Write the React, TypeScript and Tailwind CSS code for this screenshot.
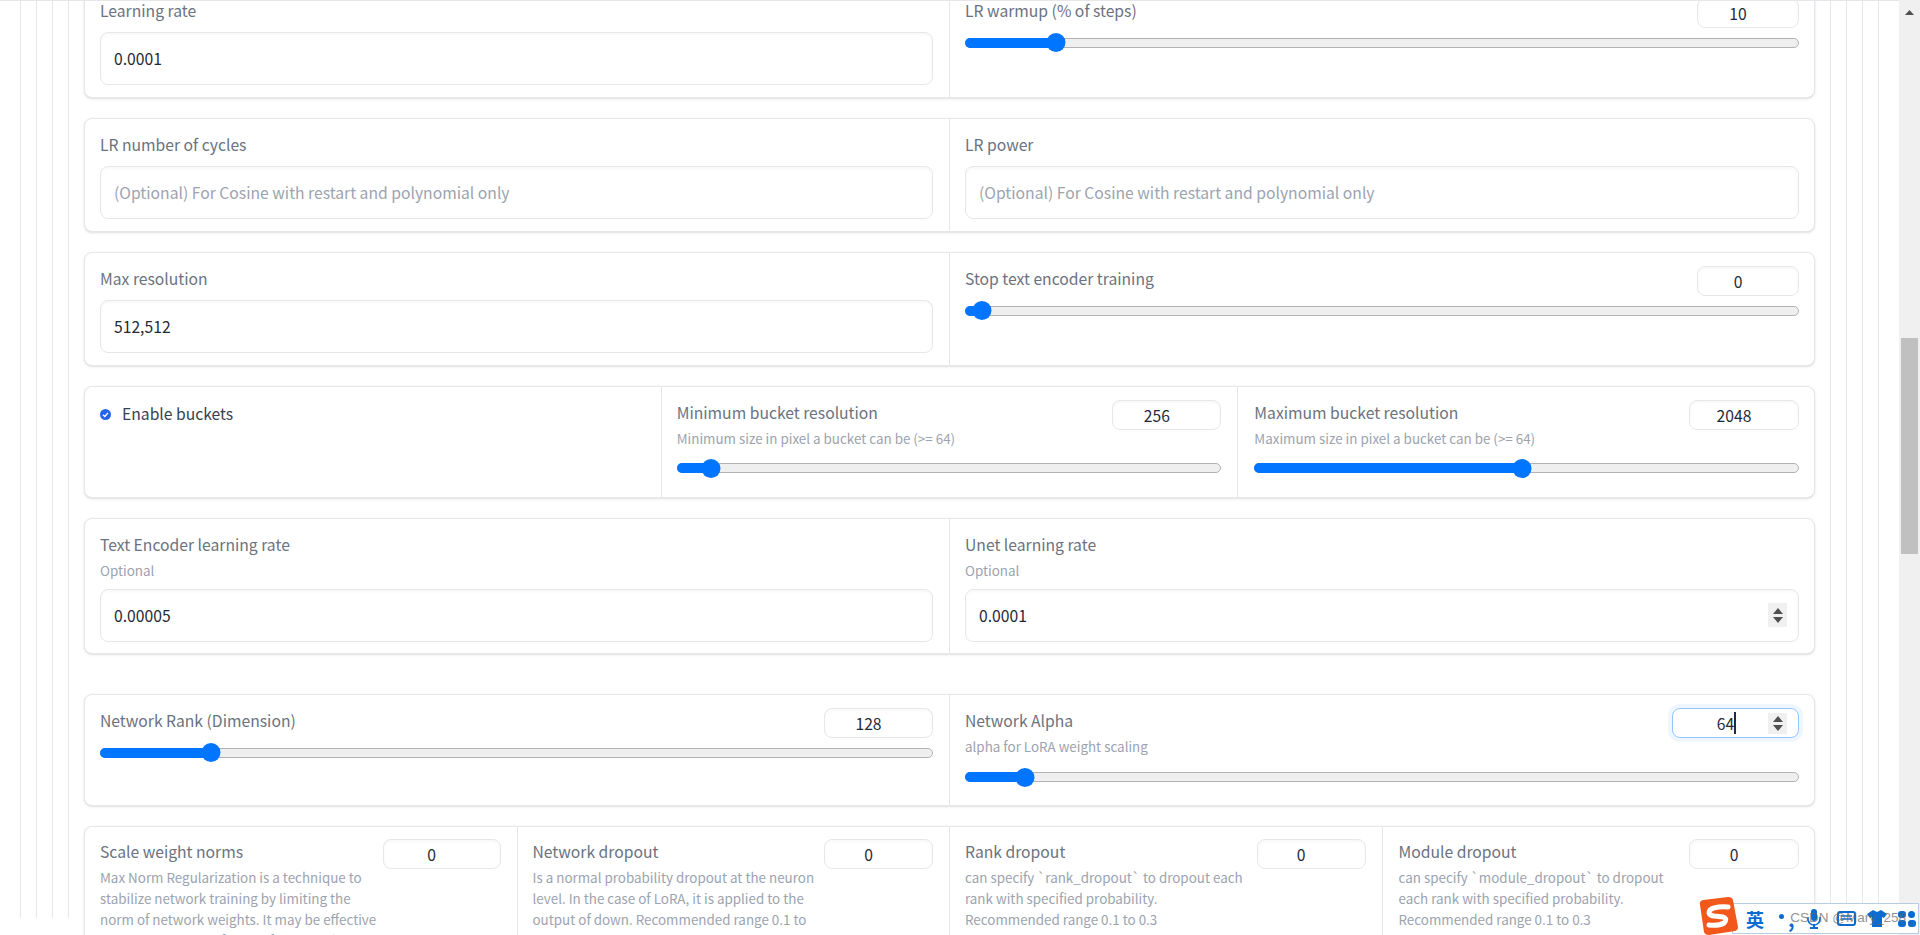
const Label = ({ children }: { children: React.ReactNode }) => (
  <div className="-mb-[2px] text-[15.7px] leading-[26px] text-[#6b7280]">{children}</div>
);

const Info = ({ children }: { children: React.ReactNode }) => (
  <div className="mt-1 text-[13.4px] leading-[21px] text-[#9ca3af]">{children}</div>
);

function TextBox({ value, placeholder, spinner }: { value?: string; placeholder?: string; spinner?: boolean }) {
  return (
    <div className="relative">
      <input
        readOnly
        value={value ?? ""}
        placeholder={placeholder}
        className="block h-[53px] w-full rounded-lg border border-[#e5e7eb] bg-white pb-px pl-[13px] text-[15.7px] text-[#1f2937] shadow-[inset_0_2px_3px_rgba(0,0,0,0.03)] outline-none placeholder:text-[#9ca3af]"
      />
      {spinner && <Spinner className="absolute right-3 top-[14px] h-6" />}
    </div>
  );
}

function Spinner({ className }: { className: string }) {
  return (
    <div className={`flex w-[19px] flex-col items-center justify-center gap-[3px] bg-[#f0f0f0] ${className}`}>
      <svg width="10" height="6" viewBox="0 0 10 6"><path d="M5 0L10 6H0Z" fill="#505050" /></svg>
      <svg width="10" height="6" viewBox="0 0 10 6"><path d="M0 0H10L5 6Z" fill="#505050" /></svg>
    </div>
  );
}

function NumberBox({ value, width }: { value: string; width: string }) {
  return (
    <input
      readOnly
      value={value}
      className={`block h-[30px] shrink-0 rounded-lg border border-[#e5e7eb] bg-white pt-px pr-5 text-center text-[15.7px] text-[#1f2937] shadow-[inset_0_2px_3px_rgba(0,0,0,0.03)] outline-none ${width}`}
    />
  );
}

function Slider({ pct, className }: { pct: number; className: string }) {
  return (
    <div className={`relative flex h-5 items-center ${className}`}>
      <div className="h-[10px] w-full rounded-full border border-[#b2b2b2] bg-[#efefef]" />
      <div className="absolute left-0 h-[10px] rounded-l-full bg-[#0075ff]" style={{ width: `${pct}%` }} />
      <div
        className="absolute size-[19px] -translate-x-1/2 rounded-full bg-[#0075ff]"
        style={{ left: `${pct}%` }}
      />
    </div>
  );
}

function Field({ label, info, value, placeholder, spinner, pad }: {
  label: string; info?: string; value?: string; placeholder?: string; spinner?: boolean; pad: string;
}) {
  return (
    <div className={`bg-white pt-[13px] pb-3 ${pad}`}>
      <Label>{label}</Label>
      {info && <Info>{info}</Info>}
      <div className={info ? "mt-2" : "mt-[10px]"}>
        <TextBox value={value} placeholder={placeholder} spinner={spinner} />
      </div>
    </div>
  );
}

function SliderField({ label, info, value, pct, width, pad }: {
  label: string; info?: string; value: string; pct: number; width: string; pad: string;
}) {
  return (
    <div className={`bg-white pt-[13px] ${pad}`}>
      <div className="flex items-start justify-between">
        <div>
          <Label>{label}</Label>
          {info && <Info>{info}</Info>}
        </div>
        <NumberBox value={value} width={width} />
      </div>
      <Slider pct={pct} className={info ? "mt-[9px]" : "mt-[4.5px]"} />
    </div>
  );
}

function AlphaField() {
  return (
    <div className="bg-white pt-[13px] pl-[15px] pr-[15px]">
      <div className="flex items-start justify-between">
        <div>
          <Label>Network Alpha</Label>
          <Info>alpha for LoRA weight scaling</Info>
        </div>
        <div className="relative w-[127px] shrink-0">
          <input
            readOnly
            value="64"
            className="block h-[30px] w-full rounded-lg border border-[#93c5fd] bg-white pt-px pr-5 text-center text-[15.7px] text-[#1f2937] shadow-[0_0_0_4px_#eff6ff] outline-none"
          />
          <div className="absolute left-[62px] top-1 h-[22px] w-[2px] bg-[#1f2a44]" />
          <Spinner className="absolute right-3 top-[5px] h-[21px]" />
        </div>
      </div>
      <Slider pct={7.2} className="mt-[10px]" />
    </div>
  );
}

function Desc({ label, text, value, width, pad }: {
  label: string; text: string; value: string; width: string; pad: string;
}) {
  return (
    <div className={`flex items-start gap-1 bg-white pt-3 ${pad}`}>
      <div className="min-w-0 flex-1">
        <Label>{label}</Label>
        <Info>{text}</Info>
      </div>
      <NumberBox value={value} width={width} />
    </div>
  );
}

const Card = ({ className, children }: { className: string; children: React.ReactNode }) => (
  <div className={`grid gap-px overflow-hidden rounded-lg border border-[#e5e7eb] bg-[#e5e7eb] shadow-sm ${className}`}>
    {children}
  </div>
);

const Rail = ({ children }: { children: React.ReactNode }) => (
  <div className="h-full border-x border-[#e5e7eb] px-[15px]">{children}</div>
);

function Sogou() {
  return (
    <div className="absolute bottom-0 right-0 h-[38px] w-[221px]">
      <div className="absolute bottom-px right-px flex h-[31px] w-[187px] items-center border border-[#b8cce4] bg-white">
        <span className="ml-[13px] text-lg leading-none font-bold text-[#0a6cd0]">英</span>
        <span className="ml-[15px] -mt-[5px] size-[5px] rounded-full bg-[#0a6cd0]" />
        <span className="ml-1 text-xl leading-none font-bold text-[#0a6cd0]">,</span>
        <svg className="ml-[11px]" width="16" height="20" viewBox="0 0 16 20" fill="#0a6cd0">
          <rect x="5" y="0" width="6" height="12" rx="3" />
          <path d="M2 8v2a6 6 0 0 0 12 0V8" fill="none" stroke="#0a6cd0" strokeWidth="1.6" />
          <path d="M7 15h2v3h3v2H4v-2h3z" />
        </svg>
        <svg className="ml-[15px]" width="19" height="15" viewBox="0 0 19 15">
          <rect x="1" y="1" width="17" height="13" rx="2" fill="none" stroke="#0a6cd0" strokeWidth="2" />
          <path d="M4 5h11M4 8h11" stroke="#0a6cd0" strokeWidth="1.5" />
        </svg>
        <svg className="ml-[11px]" width="20" height="17" viewBox="0 0 20 17" fill="#0a6cd0">
          <path d="M6 0l4 2 4-2 6 4-3 4-2-1v10H5V7L3 8 0 4z" />
        </svg>
        <svg className="ml-[11px]" width="18" height="16" viewBox="0 0 18 16" fill="#0a6cd0">
          <rect x="0" y="0" width="8" height="7" rx="3" />
          <circle cx="13.5" cy="3.5" r="3.5" />
          <rect x="0" y="9" width="8" height="7" rx="3" />
          <rect x="10" y="9" width="8" height="7" rx="3" />
        </svg>
      </div>
      <svg className="absolute bottom-0 left-0" width="40" height="38" viewBox="0 0 40 38">
        <path d="M1 8Q0 4 4 3L29 0Q33 0 34 3L39 30Q39 33 36 34L10 38Q6 38 5 35Z" fill="#f2581c" />
        <path d="M29 10Q16 9 11 13Q8 18 15 19L24 20Q29 22 25 26Q20 29 10 28" fill="none" stroke="#fff" strokeWidth="5" strokeLinecap="round" />
      </svg>
      <div className="absolute bottom-[7px] right-[14px] font-['Liberation_Sans',sans-serif] text-[13.5px] leading-5 whitespace-nowrap text-[#666] opacity-70">
        CSDN @Mary_258
      </div>
    </div>
  );
}

export default function App() {
  return (
    <div className="relative flex h-[935px] overflow-hidden bg-white font-['Noto_Sans_CJK_SC',sans-serif]">
      <div className="min-w-0 flex-1 overflow-hidden border-t border-[#e5e7eb] px-5">
        <Rail><Rail><Rail><Rail>
          <div className="-mt-[17px] flex flex-col gap-5">
            <Card className="h-[114px] grid-cols-2">
              <Field label="Learning rate" value="0.0001" pad="pl-[15px] pr-4" />
              <SliderField label="LR warmup (% of steps)" value="10" pct={10.9} width="w-[102px]" pad="pl-[15px] pr-[15px]" />
            </Card>

            <Card className="h-[114px] grid-cols-2">
              <Field label="LR number of cycles" placeholder="(Optional) For Cosine with restart and polynomial only" pad="pl-[15px] pr-4" />
              <Field label="LR power" placeholder="(Optional) For Cosine with restart and polynomial only" pad="pl-[15px] pr-[15px]" />
            </Card>

            <Card className="h-[114px] grid-cols-2">
              <Field label="Max resolution" value="512,512" pad="pl-[15px] pr-4" />
              <SliderField label="Stop text encoder training" value="0" pct={2} width="w-[102px]" pad="pl-[15px] pr-[15px]" />
            </Card>

            <Card className="h-[112px] grid-cols-3">
              <div className="flex items-center gap-[11px] self-stretch bg-white pl-[15px] pb-[71px] pt-[15px]">
                <svg width="11" height="11" viewBox="0 0 11 11">
                  <circle cx="5.5" cy="5.5" r="5.5" fill="#2563eb" />
                  <path d="M3 5.7L4.8 7.4L8 3.9" fill="none" stroke="#fff" strokeWidth="1.4" />
                </svg>
                <span className="text-[15.7px] leading-6 text-[#374151]">Enable buckets</span>
              </div>
              <SliderField label="Minimum bucket resolution" info="Minimum size in pixel a bucket can be (>= 64)" value="256" pct={6.3} width="w-[109px]" pad="pl-[15px] pr-4" />
              <SliderField label="Maximum bucket resolution" info="Maximum size in pixel a bucket can be (>= 64)" value="2048" pct={49.1} width="w-[110px]" pad="pl-4 pr-[15px]" />
            </Card>

            <Card className="h-[136px] grid-cols-2">
              <Field label="Text Encoder learning rate" info="Optional" value="0.00005" pad="pl-[15px] pr-4" />
              <Field label="Unet learning rate" info="Optional" value="0.0001" spinner pad="pl-[15px] pr-[15px]" />
            </Card>

            <Card className="mt-5 h-[112px] grid-cols-2">
              <SliderField label="Network Rank (Dimension)" value="128" pct={13.3} width="w-[109px]" pad="pl-[15px] pr-4" />
              <AlphaField />
            </Card>

            <Card className="h-[130px] grid-cols-4">
              <Desc
                label="Scale weight norms"
                text="Max Norm Regularization is a technique to stabilize network training by limiting the norm of network weights. It may be effective in suppressing overfitting of LoRA and improving stability"
                value="0"
                width="w-[118px]"
                pad="pl-[15px] pr-4"
              />
              <Desc
                label="Network dropout"
                text="Is a normal probability dropout at the neuron level. In the case of LoRA, it is applied to the output of down. Recommended range 0.1 to 0.5"
                value="0"
                width="w-[109px]"
                pad="pl-[15px] pr-4"
              />
              <Desc
                label="Rank dropout"
                text="can specify `rank_dropout` to dropout each rank with specified probability. Recommended range 0.1 to 0.3"
                value="0"
                width="w-[109px]"
                pad="pl-[15px] pr-4"
              />
              <Desc
                label="Module dropout"
                text="can specify `module_dropout` to dropout each rank with specified probability. Recommended range 0.1 to 0.3"
                value="0"
                width="w-[110px]"
                pad="pl-4 pr-[15px]"
              />
            </Card>
          </div>
        </Rail></Rail></Rail></Rail>
      </div>

      {/* scrollbar */}
      <div className="relative w-[21px] shrink-0 bg-[#f0f0f0]">
        <svg className="absolute left-[6px] top-[10px]" width="9" height="5" viewBox="0 0 9 5">
          <path d="M4.5 0L9 5H0Z" fill="#505050" />
        </svg>
        <div className="absolute left-[2px] top-[338px] h-[216px] w-[17px] bg-[#c0c0c0]" />
      </div>

      <Sogou />
    </div>
  );
}
